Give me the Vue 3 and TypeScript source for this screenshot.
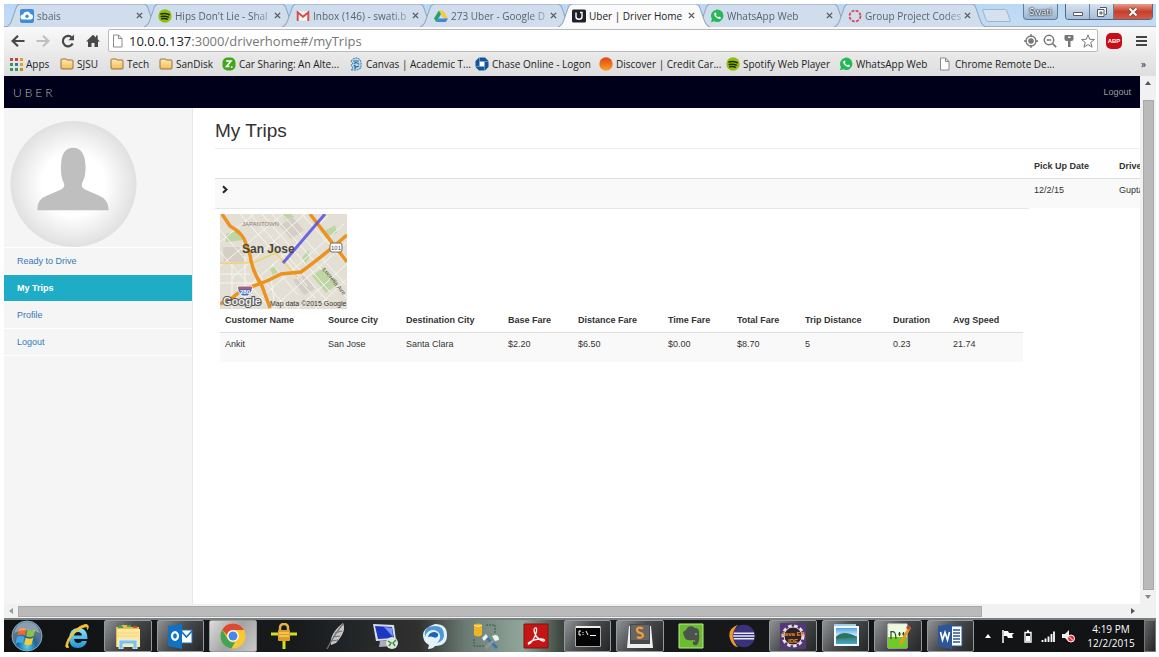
<script setup lang="ts">
import { ref } from 'vue'

interface Item { icon: string; label: string }

const tabs: Item[] = [
  { icon: 'cloud', label: 'sbais' },
  { icon: 'spotify', label: "Hips Don't Lie - Shal" },
  { icon: 'gmail', label: 'Inbox (146) - swati.b' },
  { icon: 'drive', label: '273 Uber - Google D' },
  { icon: 'uber', label: 'Uber | Driver Home' },
  { icon: 'whatsapp', label: 'WhatsApp Web' },
  { icon: 'canvas', label: 'Group Project Codes' },
]
const activeTab = ref(4)

const bookmarks: Item[] = [
  { icon: 'apps', label: 'Apps' },
  { icon: 'folder', label: 'SJSU' },
  { icon: 'folder', label: 'Tech' },
  { icon: 'folder', label: 'SanDisk' },
  { icon: 'zip', label: 'Car Sharing: An Alte...' },
  { icon: 'sjsu', label: 'Canvas | Academic T...' },
  { icon: 'chase', label: 'Chase Online - Logon' },
  { icon: 'discover', label: 'Discover | Credit Car...' },
  { icon: 'spotify', label: 'Spotify Web Player' },
  { icon: 'whatsapp', label: 'WhatsApp Web' },
  { icon: 'page', label: 'Chrome Remote De...' },
]

const menu = ['Ready to Drive', 'My Trips', 'Profile', 'Logout']
const activeMenu = ref('My Trips')

const fare = [
  { name: 'Customer Name', value: 'Ankit', width: 103 },
  { name: 'Source City', value: 'San Jose', width: 78 },
  { name: 'Destination City', value: 'Santa Clara', width: 102 },
  { name: 'Base Fare', value: '$2.20', width: 70 },
  { name: 'Distance Fare', value: '$6.50', width: 90 },
  { name: 'Time Fare', value: '$0.00', width: 69 },
  { name: 'Total Fare', value: '$8.70', width: 68 },
  { name: 'Trip Distance', value: '5', width: 88 },
  { name: 'Duration', value: '0.23', width: 60 },
  { name: 'Avg Speed', value: '21.74', width: 75 },
]

const apps = [
  { icon: 'ie', name: 'Internet Explorer', state: '' },
  { icon: 'explorer', name: 'Windows Explorer', state: 'open' },
  { icon: 'outlook', name: 'Outlook', state: 'open' },
  { icon: 'chrome', name: 'Chrome', state: 'open front' },
  { icon: 'lock', name: 'VPN', state: '' },
  { icon: 'feather', name: 'Apache', state: '' },
  { icon: 'remote', name: 'Remote Desktop', state: '' },
  { icon: 'chat', name: 'Lync', state: '' },
  { icon: 'tools', name: 'Database Tools', state: '' },
  { icon: 'acrobat', name: 'Adobe Reader', state: '' },
  { icon: 'cmd', name: 'Command Prompt', state: 'open' },
  { icon: 'sublime', name: 'Sublime Text', state: 'open' },
  { icon: 'evernote', name: 'Evernote', state: '' },
  { icon: 'eclipse', name: 'Eclipse', state: '' },
  { icon: 'javaee', name: 'Java EE IDE', state: 'open' },
  { icon: 'picture', name: 'Pictures', state: 'open' },
  { icon: 'notepad', name: 'Notepad++', state: 'open' },
  { icon: 'word', name: 'Word', state: 'open' },
]
const address = ref('/driverhome#/myTrips')
</script>

<template>
  <div class="desktop">
    <svg class="sprite" aria-hidden="true">
      <defs>
        <linearGradient id="g-folder" x2="0" y2="1"><stop stop-color="#ffe9ae" /><stop offset="1" stop-color="#f2bd5d" /></linearGradient>
        <linearGradient id="g-disc" x2="0" y2="1"><stop stop-color="#d9480f" /><stop offset="1" stop-color="#ff9d2e" /></linearGradient>
        <radialGradient id="g-orb" cy=".85"><stop stop-color="#4fd8f5" /><stop offset=".6" stop-color="#1f669e" /><stop offset="1" stop-color="#57748c" /></radialGradient>
        <radialGradient id="g-avatar"><stop offset=".5" stop-color="#fff" /><stop offset="1" stop-color="#e0e0e0" /></radialGradient>
        <linearGradient id="g-ie" x2="0" y2="1"><stop stop-color="#8ce4ff" /><stop offset="1" stop-color="#1f93d6" /></linearGradient>
        <linearGradient id="g-sky" x2="0" y2="1"><stop stop-color="#3d9be0" /><stop offset=".5" stop-color="#d6effa" /><stop offset=".55" stop-color="#377b71" /><stop offset="1" stop-color="#46afd4" /></linearGradient>
      </defs>

      <symbol id="cloud" viewBox="0 0 14 14"><rect width="14" height="14" rx="2" fill="#3e8ed8" /><path d="M3 10.500a2.500 2.500 0 0 1 0-5 4 4 0 0 1 7.500-.5 2.800 2.800 0 0 1 .5 5.500z" fill="#fff" /><circle cx="7" cy="7.300" r="1.700" fill="#3e8ed8" /></symbol>
      <symbol id="spotify" viewBox="0 0 14 14"><circle cx="7" cy="7" r="6.700" fill="#93bf0b" /><path d="M3 5q4-1.300 8.300.7M3.300 7.500q4-1 7 .7M3.800 9.700q3-.8 5.500.5" fill="none" stroke="#1c2b05" stroke-width="1.500" stroke-linecap="round" /></symbol>
      <symbol id="gmail" viewBox="0 0 14 14"><path d="M1 2.500h12v9H1z" fill="#f4f4f4" /><path d="M1.700 12V3.200L7 7.700l5.300-4.500V12" fill="none" stroke="#d64b43" stroke-width="1.900" /></symbol>
      <symbol id="drive" viewBox="0 0 14 14"><path d="M4.800 1.500h4.400L14 9.400H9.600z" fill="#fbc934" /><path d="M4.800 1.500 7 5.200 2.300 13 0 9.400z" fill="#24a367" /><path d="M4.600 9.400H14L11.800 13H2.300z" fill="#4285dc" /></symbol>
      <symbol id="uber" viewBox="0 0 14 14"><rect width="14" height="13" y=".5" rx="1.500" fill="#20202b" /><path d="M4 3.500v4.300q0 2.500 3 2.500t3-2.500V3.500H8" fill="none" stroke="#fff" stroke-width="1.400" /></symbol>
      <symbol id="whatsapp" viewBox="0 0 14 14"><path d="M1 13.200 1.900 10A6.200 6.200 0 1 1 4.300 12.300z" fill="#26b857" /><path d="M4.800 3.700Q3 5.500 6 8.300t4.700 1.300l.1-1.300-1.800-.9-.9.900Q6.500 7.600 5.900 5.900l.7-.8-.7-1.600z" fill="#fff" /></symbol>
      <symbol id="canvas" viewBox="0 0 14 14"><circle cx="7" cy="7" r="5.500" fill="none" stroke="#dc4352" stroke-width="1.700" stroke-dasharray="3 1.320" /></symbol>
      <symbol id="apps" viewBox="0 0 14 14"><g stroke-width="3" stroke-dasharray="3 2"><path d="M1 2.500h3" stroke="#cc453b" /><path d="M6 2.500h3" stroke="#cc453b" /><path d="M11 2.500h3" stroke="#dda22c" /><path d="M1 7.500h3" stroke="#359853" /><path d="M6 7.500h3" stroke="#3971c6" /><path d="M11 7.500h3" stroke="#dda22c" /><path d="M1 12.500h3M6 12.500h3" stroke="#359853" /><path d="M11 12.500h3" stroke="#b7962f" /></g></symbol>
      <symbol id="folder" viewBox="0 0 14 14"><path d="M1 3q0-1 1-1h4q1 0 1 1h5q1 0 1 1v7q0 1-1 1H2q-1 0-1-1z" fill="url(#g-folder)" stroke="#98713c" /></symbol>
      <symbol id="zip" viewBox="0 0 14 14"><rect x=".5" y=".5" width="13" height="13" rx="5" fill="#43a51c" /><path d="M4 4h5L4.500 9.500h3M9 10h1.500" fill="none" stroke="#fff" stroke-width="1.600" /></symbol>
      <symbol id="sjsu" viewBox="0 0 14 14"><path d="M2 4q2-3 6-3 4 1 4 5v5l-4 2H2l2-2-2-3 2-1z" fill="#bdd9ea" stroke="#397bab" stroke-dasharray="2 .7" /><path d="M4 4h6M5 6.500q3-2 5 1M5 8l2 2 3-1M6 12v-3" fill="none" stroke="#2369a0" stroke-width="1.200" /></symbol>
      <symbol id="chase" viewBox="0 0 14 14"><path d="M4 .5h6L13.500 4v6L10 13.500H4L.5 10V4z" fill="#14559b" /><path d="M4.500 4.500h5v5h-5z" fill="#fff" /><path d="M4.500 0v4.500M14 4.500H9.500M9.500 14V9.500M0 9.500h4.500" stroke="#e5e5e5" stroke-width=".4" /></symbol>
      <symbol id="discover" viewBox="0 0 14 14"><circle cx="7" cy="7" r="6.700" fill="url(#g-disc)" /></symbol>
      <symbol id="page" viewBox="0 0 14 14"><path d="M2.500 1h5L11 4.500V13H2.500zM7.500 1v3.500H11" fill="#fff" stroke="#8b8b8b" /></symbol>

      <symbol id="back" viewBox="0 0 14 14"><path d="M13.500 7H2M7 1.700 1.500 7 7 12.300" fill="none" stroke="currentColor" stroke-width="2.200" /></symbol>
      <symbol id="forward" viewBox="0 0 14 14"><path d="M.5 7H12M7 1.700 12.500 7 7 12.300" fill="none" stroke="currentColor" stroke-width="2.200" /></symbol>
      <symbol id="reload" viewBox="0 0 14 14"><path d="M11.700 9.500A5.200 5.200 0 1 1 10.800 3.500" fill="none" stroke="currentColor" stroke-width="2.200" /><path d="M13 .5v5.700H7.300z" fill="currentColor" /></symbol>
      <symbol id="home" viewBox="0 0 14 14"><path d="M7 .8 0 7.500h2V13h3.500V9h3v4H12V7.500h2L11.700 5.200V1.500H9.900v2z" fill="currentColor" /></symbol>
      <symbol id="locate" viewBox="0 0 14 14"><circle cx="7" cy="7" r="5" fill="none" stroke="currentColor" stroke-width="1.300" /><circle cx="7" cy="7" r="2.800" fill="currentColor" /><path d="M7 0v3M7 11v3M0 7h3M11 7h3" stroke="currentColor" stroke-width="1.300" /></symbol>
      <symbol id="zoomout" viewBox="0 0 14 14"><circle cx="6" cy="6" r="4.700" fill="none" stroke="currentColor" stroke-width="1.500" /><path d="M3.800 6h4.400M9.500 9.500l3.700 3.700" stroke="currentColor" stroke-width="1.700" /></symbol>
      <symbol id="key" viewBox="0 0 14 14"><path d="M3.500 1h7q1 0 1 1v3q0 2-2 2H8.500v6H6V7H4.500q-2 0-2-2V2q0-1 1-1z" fill="currentColor" /><path d="M6 3.300h2.500" stroke="#fff" stroke-width="1.300" /></symbol>
      <symbol id="star" viewBox="0 0 14 14"><path d="M7 .8 8.700 5.300l4.800.2-3.800 3 1.400 4.700L7 10.500l-4.100 2.700 1.400-4.700-3.800-3 4.800-.2z" fill="none" stroke="currentColor" /></symbol>

      <symbol id="orb" viewBox="0 0 32 32"><circle cx="16" cy="16" r="15" fill="url(#g-orb)" stroke="#86aec4" /><path d="M8 9q4-2 7.500 0l-1.600 6.500q-3.500-2-7.500 0z" fill="#ef6a26" /><path d="M16.700 9.600q4 2 7.600 0l-1.600 6.500q-4 2-7.600 0z" fill="#8dc43c" /><path d="M6 17q4-2 7.500 0L12 23.500q-4-2-7.500 0z" fill="#41a7e7" /><path d="M14.700 17.700q4 2 7.600 0l-1.600 6.500q-4 2-7.500 0z" fill="#fbc934" /><path d="M3 13Q6 2 16 2t13 11q-13-6-26 0" fill="#fff" opacity=".3" /></symbol>
      <symbol id="ie" viewBox="0 0 26 26"><path d="M23.500 16H10q.7 4.300 4.500 4 2.500 0 3.500-2h5q-2 7-9 7-8.500 0-9-9.500Q5.500 5.500 14 5q9.500 0 9.500 11M10 12.500h8q-.5-3.500-4-3.500t-4 3.500" fill="url(#g-ie)" /><path d="M5 24Q-1 27 4 16 11 4 21 1.500q5-.5 2.500 5Q24 2 18 5 8 10 4.500 19 3 24 5 24" fill="#f8c52c" stroke="#f8c52c" stroke-width=".8" /></symbol>
      <symbol id="explorer" viewBox="0 0 26 26"><path d="M1 4h4l2-2h7l1 2h9v20H1z" fill="#e9b94c" /><path d="M2 6h23v18H2z" fill="#fbe99f" /><path d="M3 4h5M12 3h4" stroke="#42a051" stroke-width="2" /><path d="M18 4h4" stroke="#cf4a33" stroke-width="2" /><path d="M2 10h22M2 13h22" stroke="#f2d477" /><path d="M4 26v-9h18v9h-4v-5H8v5z" fill="#7dc0ea" stroke="#d5effc" /></symbol>
      <symbol id="outlook" viewBox="0 0 26 26"><path d="M14 7h11v13H14z" fill="#fff" stroke="#1672c4" /><path d="m14 8 5.500 6L25 8" fill="none" stroke="#1672c4" stroke-width="1.800" /><path d="m1 3 14-2v25L1 23z" fill="#1071c5" /><ellipse cx="8" cy="13" rx="3" ry="3.800" fill="none" stroke="#fff" stroke-width="2.200" /></symbol>
      <symbol id="chrome" viewBox="0 0 26 26"><circle cx="13" cy="13" r="12.500" fill="#fac833" /><path d="M2.200 6.700A12.500 12.500 0 0 1 24 7H13a6 6 0 0 0-6 5z" fill="#db4939" /><path d="M2.200 6.700 8 16.500q2 3.500 7 2.500l-3.500 6.500A12.500 12.500 0 0 1 2.200 6.700" fill="#43a554" /><circle cx="13" cy="13" r="5.800" fill="#fff" /><circle cx="13" cy="13" r="4.500" fill="#4787e8" /></symbol>
      <symbol id="lock" viewBox="0 0 26 26"><path d="M0 11h26M13 15v11" stroke="#c9e51f" stroke-width="3" /><path d="M9 9V5q0-4 4-4t4 4v4" fill="none" stroke="#e1b347" stroke-width="2.500" /><rect x="7" y="7" width="12" height="11" rx="1" fill="#dd9d29" /><path d="M8 10h10M8 13h10" stroke="#f6d062" stroke-width="1.500" /></symbol>
      <symbol id="feather" viewBox="0 0 26 26"><path d="M21 0q4 8-7 20l-5 2Q7 11 21 0" fill="#c6c6c6" /><path d="M21 1Q14 9 5 26M11 14l7-1M13 10l7-2M10 18l6-1" fill="none" stroke="#727272" stroke-width="1.200" /></symbol>
      <symbol id="remote" viewBox="0 0 26 26"><path d="m1 1 21 1 2 15-20 1z" fill="#d8dde6" /><path d="m3 3 17 1 2 11-16 1z" fill="#1c37c2" /><path d="m12 4 8 1 1 9z" fill="#7895ec" /><path d="m8 18 12 0 2 5-15 1z" fill="#a8aeb5" /><circle cx="20" cy="20" r="6" fill="#dfe6d9" /><path d="m16 18 3 2-2 3M24 17l-3 3 2 3" fill="none" stroke="#37943f" stroke-width="1.500" /></symbol>
      <symbol id="chat" viewBox="0 0 26 26"><path d="M13 1q12 0 12 11T13 23q-2 3-7 3l1-4Q1 19 1 12T13 1" fill="#e2f3fc" /><path d="M3 14Q1 3 13 3q9 0 9 9 0 6-7 8 4-4 3-8-2-5-7-5-6 0-8 7" fill="#4f97d6" /><path d="M6 14q1-5 7-5 4 1 3 4-2 3-5 1-2-1-5 0" fill="#1f62ae" /></symbol>
      <symbol id="tools" viewBox="0 0 26 26"><path d="M1 2q4-3 8 0v10q-4 3-8 0z" fill="#edb526" /><path d="M1 2q4 3 8 0" fill="none" stroke="#fff0a0" /><path d="M13 2h9v9M1 16v7h10" fill="none" stroke="#2f5a35" stroke-dasharray="2 1" /><path d="m12 13 12 12" stroke="#3b76ae" stroke-width="3" /><path d="m13 25 9-9" stroke="#8f9698" stroke-width="3" /><path d="m19 13 3 5 4-1q0-5-4-5M9 15l4-4 2 3-4 4z" fill="#eef2f4" /></symbol>
      <symbol id="acrobat" viewBox="0 0 26 26"><path d="M1 1h24v24H1z" fill="#c51515" stroke="#811313" /><path d="M12 5q2-1 1.500 3-.5 4-3 8-3 5-5 5-1-1 3-3 4-2 9-2 4 0 4 1.500-1 1.500-5-1-4-3-5-7-1-4 .5-4.500" fill="none" stroke="#fff" stroke-width="1.300" /></symbol>
      <symbol id="cmd" viewBox="0 0 26 26"><path d="M.5 3.500h25v20H.5z" fill="#050505" stroke="#a9a9a9" /><path d="M1 4h24" stroke="#eee" stroke-width="2" /><path d="M6 8H4v4h2M8 9v1M8 11v1M11 8l2 4M15 12.500h6" fill="none" stroke="#fff" /></symbol>
      <symbol id="sublime" viewBox="0 0 26 26"><path d="M2 3h22l2 22H0z" fill="#eee" /><path d="M3 1h20v20H3z" fill="#494949" /><path d="M4 2h18v15H4z" fill="#656565" /><path d="M16 5.500q-6-2-6 1t3 3.300 3 3.200q-2 3-6 1" fill="none" stroke="#f79b36" stroke-width="2.200" /></symbol>
      <symbol id="evernote" viewBox="0 0 26 26"><path d="M1 1h24v24H1z" fill="#6abd30" stroke="#b8ef86" /><path d="M5 9q3-1 5-5 4-2 7 1 4 0 4 4 1 10-2 13-3 1-4-1v-3l2 1q1-2-2-2-7 1-8-2-2-4-2-6" fill="#4c534d" /><path d="M17 11h2" stroke="#c3cfc0" /></symbol>
      <symbol id="eclipse" viewBox="0 0 28 26"><path d="M10 1Q-2 5 1 16q3 9 9 9-5-4-5-12T10 1" fill="#f3992a" /><circle cx="16" cy="13" r="12" fill="#39327a" /><path d="M5 10h22M4.500 13h23M5 16h22" stroke="#e6e9f4" stroke-width="1.700" /></symbol>
      <symbol id="javaee" viewBox="0 0 26 26"><path d="M0 0h26v26H0z" fill="#533777" /><circle cx="13" cy="13" r="10" fill="#3a2541" stroke="#e7e0e7" stroke-width="3" stroke-dasharray="3.500 2.500" /><circle cx="13" cy="13" r="9" fill="#2d2229" stroke="#ddd" /><text x="13" y="13" text-anchor="middle">Java EE</text><text x="13" y="20" text-anchor="middle">IDE</text></symbol>
      <symbol id="picture" viewBox="0 0 26 26"><path d="M1 1h22v20H1z" fill="#9ed0e9" /><path d="M2 4h23v18H2z" fill="url(#g-sky)" stroke="#eff9ff" stroke-width="2" /><path d="M3 14q7-8 21 0l-21 2z" fill="#2f7160" /></symbol>
      <symbol id="notepad" viewBox="0 0 26 26"><path d="M3 1h19v24H3z" fill="#ecfbde" stroke="#e8e8e8" /><path d="M3 14h19v11H3z" fill="#70cc25" /><path d="M6 8v8M6 9q5-2 5 7M13 11h3M17 11h3M14.500 9v4M18.500 9v4" fill="none" stroke="#2d4430" stroke-width="1.200" /><path d="m24 3 2 2-9 16-3 1 1-4z" fill="#e89a26" /><path d="m23 2 3 2-2 3-3-2z" fill="#c7443d" /></symbol>
      <symbol id="word" viewBox="0 0 26 26"><path d="M13 3h12v20H13z" fill="#fff" stroke="#2b579a" /><path d="M16 7h7M16 10h7M16 13h7M16 16h7M16 19h7" stroke="#2b579a" stroke-width="1.500" /><path d="m1 3 14-2v25L1 23z" fill="#2b579a" /><path d="m3.500 9 2 8L8 9.500l2.500 7.500 2-8" fill="none" stroke="#fff" stroke-width="1.700" /></symbol>
    </svg>

    <header class="chrome">
      <div class="strip">
        <nav class="tabs" aria-label="Tabs">
          <div v-for="(t, i) in tabs" :key="t.label" class="tab" :class="{ active: i === activeTab }">
            <svg class="shape" viewBox="0 0 152 22" preserveAspectRatio="none"><path d="M0 22Q4 21 6 15L10 4Q11 0 15 0H137Q141 0 142 4L146 15Q148 21 152 22" /></svg>
            <button class="pick" @click="activeTab = i"><svg class="i14"><use :href="'#' + t.icon" /></svg><span>{{ t.label }}</span></button>
            <button class="close" :aria-label="'Close ' + t.label"><svg viewBox="0 0 8 8"><path d="m1 1 6 6M7 1 1 7" /></svg></button>
          </div>
          <button class="new" aria-label="New tab"></button>
        </nav>
        <div class="controls">
          <button class="user">Swati</button>
          <div class="winbtns">
            <button aria-label="Minimize"><svg viewBox="0 0 14 12"><path d="M2.500 6.500h9v3h-9z" fill="#fff" stroke="#545b68" /></svg></button>
            <button aria-label="Restore"><svg viewBox="0 0 14 12"><path d="M5 1.500h6.500v7H10M2.500 3.500H9v7H2.500zM5 6h2v2H5z" fill="#fff" stroke="#545b68" /></svg></button>
            <button class="x" aria-label="Close window"><svg viewBox="0 0 14 12"><path d="m3.500 2.500 7 7M10.500 2.500l-7 7" stroke="#6f3530" stroke-width="3.600" /><path d="m3.500 2.500 7 7M10.500 2.500l-7 7" stroke="#fff" stroke-width="2.200" /></svg></button>
          </div>
        </div>
      </div>

      <div class="toolbar">
        <button class="tool" aria-label="Back"><svg class="i14"><use href="#back" /></svg></button>
        <button class="tool off" aria-label="Forward"><svg class="i14"><use href="#forward" /></svg></button>
        <button class="tool" aria-label="Reload"><svg class="i14"><use href="#reload" /></svg></button>
        <button class="tool" aria-label="Home"><svg class="i14"><use href="#home" /></svg></button>
        <div class="omnibox">
          <svg class="i14"><use href="#page" /></svg>
          <label class="host" for="address">10.0.0.137<span>:3000</span></label>
          <input id="address" v-model="address" type="text" />
          <button v-for="n in ['locate', 'zoomout', 'key', 'star']" :key="n" :aria-label="n"><svg class="i14"><use :href="'#' + n" /></svg></button>
        </div>
        <button class="abp">ABP</button>
        <button class="burger" aria-label="Menu"><i></i><i></i><i></i></button>
      </div>

      <nav class="bookmarks" aria-label="Bookmarks">
        <a v-for="b in bookmarks" :key="b.label" href="#"><svg class="i14"><use :href="'#' + b.icon" /></svg>{{ b.label }}</a>
        <button class="more" aria-label="More bookmarks">»</button>
      </nav>
    </header>

    <div class="viewport">
      <div class="page">
        <header class="navbar"><a class="brand" href="#">UBER</a><a class="logout" href="#">Logout</a></header>
        <div class="body">
          <aside class="side">
            <svg class="avatar" viewBox="0 0 127 127" role="img" aria-label="Driver photo"><circle cx="63.500" cy="63.500" r="63.500" fill="url(#g-avatar)" /><path d="M27 90q-1-11 10-15l14-6q4-2 3-6-4-7-3-20 1-16 12-16t12.500 16q1 12-3.500 20-1 4 3 6l14 6q10 4 10 15z" fill="#bfbfbf" /></svg>
            <nav class="menu" aria-label="Driver">
              <a v-for="m in menu" :key="m" href="#" :class="{ on: m === activeMenu }" @click.prevent="activeMenu = m">{{ m }}</a>
            </nav>
          </aside>
          <main class="main">
            <h1>My Trips</h1>
            <table class="trips">
              <colgroup><col class="c-detail" /><col class="c-date" /><col /></colgroup>
              <thead><tr><th></th><th>Pick Up Date</th><th>Driver Name</th></tr></thead>
              <tbody>
                <tr class="trip">
                  <td><button class="toggle" aria-label="Toggle trip"><svg viewBox="0 0 6 8"><path d="m1 0.700 3.500 3.300L1 7.300" /></svg></button></td>
                  <td>12/2/15</td><td>Gupta</td>
                </tr>
                <tr>
                  <td class="detail">
                    <svg class="map" viewBox="0 0 127 95" role="img" aria-label="Map of San Jose">
                      <rect width="127" height="95" fill="#e3dfd5" />
                      <g fill="#bed6a3"><path d="m6 20 14-4 3 10-17 2zM92 62l12-9 15 16-13 10zM82 44l6-8 2 6-4 7zM50 55l5-3 3 6-5 3zM62 0h9l3 3-9 3zM103 18l12-7 2 8-8 3z" /></g>
                      <g fill="#d4cec5"><path d="m60 12 12-9 12 13-13 9zM3 33l16 0 9 15H4zM73 66l12-5 10 14-11 6z" /></g>
                      <g stroke="#f7f5f0" stroke-width="1" fill="none">
                        <path d="m0 16 68 79M20 0l75 84M42 0l68 78M62 0l64 71M82 0l45 50M0 38l48 54M30 0l80 90M52 0l75 84M0 28 34 0M0 52 63 0M12 64 85 0M20 80 108 2M42 83 124 10M52 95 127 28M77 95 127 50M95 95l32-30" />
                        <path d="M0 69h38l13-6 4 32M12 48v47M25 42v51M0 60h30M52 50l26 31M61 40l26 32" />
                      </g>
                      <path d="M0 49q20 1 35-1L60 37M50 33l27 30" fill="none" stroke="#efd36f" stroke-width="1.500" />
                      <g fill="none" stroke="#ec921d" stroke-width="3.500"><path d="M2 0 10 12q14 8 16 18 4 8 5 17 3 13 11 25l8 22" /><path d="M0 90 12 84 23 75q20-5 38-15l20-2q22-16 46-37M90 0l37 48" /></g>
                      <path d="M105 0 63 49" stroke="#5552e0" stroke-width="3" opacity=".85" />
                      <rect x="110" y="29" width="12" height="9" rx="2" fill="#fff" stroke="#776c60" />
                      <path d="M18 72h14v5l-4 5h-6l-4-5z" fill="#3d6fc3" stroke="#fff" /><path d="M18 74h14" stroke="#d25350" stroke-width="2" />
                      <text class="m-sm" x="22" y="12">JAPANTOWN</text>
                      <text class="m-city" x="22" y="39">San Jose</text>
                      <text class="m-road" x="111" y="36">101</text>
                      <text class="m-280" x="20" y="80">280</text>
                      <text class="m-road" transform="translate(102 56) rotate(50)">Lucretia Ave</text>
                      <text class="m-logo" x="3" y="91">Google</text>
                      <text class="m-copy" x="50" y="92">Map data ©2015 Google</text>
                    </svg>
                    <table class="fares">
                      <colgroup><col v-for="f in fare" :key="f.name" :style="{ width: f.width + 'px' }" /></colgroup>
                      <thead><tr><th v-for="f in fare" :key="f.name">{{ f.name }}</th></tr></thead>
                      <tbody><tr><td v-for="f in fare" :key="f.name">{{ f.value }}</td></tr></tbody>
                    </table>
                  </td>
                  <td></td><td></td>
                </tr>
              </tbody>
            </table>
          </main>
        </div>
      </div>
      <div class="vbar"><i class="arrow up"></i><span></span><i class="arrow down"></i></div>
    </div>
    <div class="hbar"><i class="arrow left"></i><div><span></span></div><i class="arrow right"></i></div>

    <footer class="taskbar">
      <button class="start" aria-label="Start"><svg><use href="#orb" /></svg></button>
      <div class="running">
        <button v-for="a in apps" :key="a.icon" :class="a.state" :aria-label="a.name"><svg><use :href="'#' + a.icon" /></svg></button>
      </div>
      <div class="tray">
        <button aria-label="Show hidden icons"><i class="arrow up light"></i></button>
        <button aria-label="Action center"><svg viewBox="0 0 14 14"><path d="M2 1v13" stroke="#fff" stroke-width="1.500" /><path d="M3 2h4l1 2h5l-2 2 1 3H7L6 7H3z" fill="#fff" /></svg></button>
        <button aria-label="Battery"><svg viewBox="0 0 14 14"><path d="M4 3.500h6v9.500H4zM6 2h2" fill="none" stroke="#fff" stroke-width="1.400" /><path d="M5 7h4v5H5z" fill="#fff" /></svg></button>
        <button aria-label="Network"><svg viewBox="0 0 14 14"><path d="M1.500 13v-2M4.500 13V9.500M7.500 13V7.500M10.500 13V5M13 13V2.500" stroke="#fff" stroke-width="1.800" /></svg></button>
        <button aria-label="Volume muted"><svg viewBox="0 0 14 14"><path d="M1 5h3l4-4v12L4 9H1z" fill="#eee" /><circle cx="10" cy="9.500" r="3.500" fill="#df332d" stroke="#fff" /><path d="m8 7.500 4 4" stroke="#fff" /></svg></button>
      </div>
      <time class="clock"><span>4:19 PM</span><span>12/2/2015</span></time>
      <button class="peek" aria-label="Show desktop"></button>
    </footer>
  </div>
</template>

<style>
body { background: #fff; }
</style>

<style scoped>
* { box-sizing: border-box; }
button { border: 0; padding: 0; background: none; font: inherit; color: inherit; display: flex; align-items: center; justify-content: center; }
a { text-decoration: none; color: inherit; }
.desktop { min-height: 100vh; padding: 4px 3px 5px 4px; display: flex; flex-direction: column; font-family: "Open Sans", "Noto Sans", sans-serif; color: #333; }
.sprite { position: absolute; width: 0; height: 0; }
.sprite text { font: bold 6px "Liberation Sans", sans-serif; fill: #f08a23; }
.i14 { width: 14px; height: 14px; flex: none; }

.strip { display: flex; justify-content: space-between; height: 23px; background: linear-gradient(#b9d8f5, #c3dcf4); border-bottom: 1px solid #a5adb6; }
.tabs { display: flex; padding-left: 2px; }
.tab { position: relative; width: 138px; height: 23px; display: flex; align-items: center; padding: 0 0 0 14px; }
.shape { position: absolute; left: 0; top: 0; width: 152px; height: 23px; }
.shape path { fill: #d0dded; stroke: #8fa4bb; }
.tab.active { z-index: 1; }
.tab.active .shape path { fill: #fafafa; }
.pick { position: relative; flex: 1; min-width: 0; justify-content: flex-start; gap: 3px; font-size: 10px; color: #59636f; }
.pick span { flex: 1; min-width: 0; text-align: left; white-space: nowrap; mask-image: linear-gradient(90deg, #000 80%, rgb(0 0 0 / 30%)); }
.active .pick { color: #222; }
.active .pick span { mask-image: none; }
.close { position: relative; width: 10px; flex: none; }
.close svg { width: 7px; height: 7px; stroke: #555; stroke-width: 1.500; }
.new { width: 25px; height: 13px; margin: 5px 0 0 12px; background: #d5e1ef; border: 1px solid #9db5cd; border-radius: 2px; transform: skewX(20deg); }
.controls { display: flex; gap: 7px; align-items: flex-start; padding-right: 3px; }
.user { width: 35px; height: 16px; border: 1px solid #667c95; border-top: 0; border-radius: 0 0 4px 4px; background: linear-gradient(#c8dcf0, #9cb7d2); color: #fff; font-size: 9px; text-shadow: 0 0 2px #000, 0 0 2px #000; }
.winbtns { display: flex; border: 1px solid #566779; border-top: 0; border-radius: 0 0 4px 4px; overflow: hidden; }
.winbtns button { width: 24px; height: 15px; background: linear-gradient(#d5e3f1, #a6bed6); border-right: 1px solid #6c8095; }
.winbtns .x { width: 38px; border: 0; background: linear-gradient(#e79c8b, #c5402d 50%, #d55a42); }
.winbtns svg { width: 14px; height: 12px; fill: none; }

.toolbar { display: flex; align-items: center; height: 27px; padding: 0 9px 0 7px; background: linear-gradient(#f9f9f9, #eaeaea); color: #484848; }
.tool { width: 14px; margin-right: 11px; }
.tool.off { color: #c0c0c0; }
.omnibox { flex: 1; min-width: 0; display: flex; align-items: center; height: 23px; padding: 0 2px; margin-left: -3px; background: #fff; border: 1px solid #bababa; border-radius: 2px; color: #777; }
.host { margin-left: 4px; font-size: 13px; color: #222; }
.host span { color: #777; }
.omnibox input { flex: 1; min-width: 0; border: 0; padding: 0; outline: 0; background: none; font: 13px "Open Sans", "Noto Sans", sans-serif; color: #777; }
.omnibox button { margin-left: 5px; }
.abp { width: 16px; height: 16px; margin: 0 14px 0 8px; border-radius: 5px; background: #c70d18; color: #fff; font: bold 6px "Liberation Sans", sans-serif; }
.burger { flex-direction: column; gap: 2px; width: 11px; }
.burger i { width: 11px; height: 2px; background: #444; }

.bookmarks { display: grid; grid-template-columns: 51px 50px 49px 63px 127px 126px 124px 127px 113px 99px 1fr auto; align-items: center; height: 22px; padding: 0 10px 3px 5px; background: linear-gradient(#e9e9e9, #dedede); font-size: 10px; color: #222; }
.bookmarks a { display: flex; align-items: center; gap: 3px; white-space: nowrap; }

.viewport { flex: 1; display: flex; min-height: 0; }
.page { flex: 1; min-width: 0; overflow: hidden; display: flex; flex-direction: column; font-family: "Liberation Sans", Arial, sans-serif; font-size: 9px; line-height: 13px; }
.navbar { display: flex; justify-content: space-between; align-items: center; height: 32px; padding: 0 9px; background: #00001a; color: #9d9d9d; }
.brand { font: 300 12px Lato, "Liberation Sans", sans-serif; letter-spacing: 3px; color: #b5b5b5; }
.body { flex: 1; display: flex; }
.side { width: 189px; flex: none; padding-top: 13px; background: #f5f5f5; border-right: 1px solid #e8e8e8; }
.avatar { display: block; width: 127px; height: 126px; margin-left: 6px; }
.menu a { display: flex; align-items: center; height: 27px; padding-left: 13px; border-top: 1px solid #fff; color: #337ab7; }
.menu { border-bottom: 1px solid #fff; }
.menu a.on { background: #1facc7; color: #fff; font-weight: bold; }
.main { flex: 1; min-width: 0; padding: 10px 0 0 22px; overflow: hidden; }
h1 { margin: 0 0 4px; padding-bottom: 5px; border-bottom: 1px solid #eee; font-size: 19px; line-height: 25px; font-weight: normal; color: #333; }
table { border-collapse: collapse; table-layout: fixed; }
th { padding: 5px; text-align: left; vertical-align: bottom; white-space: nowrap; color: #333; }
td { padding: 5px; vertical-align: top; }
.trips { width: 1010px; }
.c-detail { width: 814px; }
.c-date { width: 85px; }
.trips > thead th { padding-bottom: 5px; height: 25px; border-bottom: 1px solid #ddd; }
.trip td { height: 30px; background: #f9f9f9; }
.trip td:first-child { border-bottom: 1px solid #e6e6e6; }
.toggle { margin: 1px 0 0 2px; }
.toggle svg { width: 6px; height: 9px; fill: none; stroke: #222; stroke-width: 2; }
.map { display: block; width: 127px; height: 95px; }
.fares { width: 803px; }
.fares th { height: 24px; border-bottom: 1px solid #ddd; }
.fares td { height: 29px; background: #f9f9f9; }
.m-sm { font-size: 6px; fill: #8c8074; }
.m-city { font-size: 12px; font-weight: bold; fill: #484541; }
.m-road { font-size: 6px; fill: #554e48; }
.m-280 { font-size: 6px; font-weight: bold; fill: #fff; }
.m-logo { font-size: 11px; font-weight: bold; fill: #eee; stroke: #555; stroke-width: 2px; paint-order: stroke; }
.m-copy { font-size: 7px; fill: #333; }

.vbar { width: 16px; display: flex; flex-direction: column; align-items: center; padding: 5px 0; background: #f1f1f1; }
.vbar span { flex: 1; width: 11px; margin: 15px 0 5px; background: #bababa; border: 1px solid #a9a9a9; }
.arrow { width: 0; height: 0; border: 3px solid transparent; }
.up { border-bottom: 4px solid #555; border-top: 0; }
.down { border-top: 4px solid #888; border-bottom: 0; }
.left { border-right: 4px solid #999; border-left: 0; }
.right { border-left: 4px solid #555; border-right: 0; }
.light { border-bottom-color: #fff; }
.hbar { display: flex; align-items: center; height: 14px; padding: 0 21px 0 5px; background: #f1f1f1; }
.hbar div { flex: 1; margin: 0 5px; }
.hbar span { display: block; width: 87%; height: 11px; background: #bababa; border: 1px solid #a9a9a9; }

.taskbar { display: flex; height: 34px; border-top: 2px solid #797e80; background: linear-gradient(90deg, #101214, #17191b 25%, #222527 30%, #30302f 36%, #697a72 40%, #91a69b 45%, #455049 48%, #242526 50%, #17191b 54%, #101214); }
.start { width: 46px; }
.start svg { width: 32px; height: 32px; }
.running { flex: 1; display: flex; gap: 5px; padding-left: 4px; }
.running button { flex: 1; border-radius: 2px; }
.running svg { width: 26px; height: 26px; }
.running .open { border: 1px solid #96999b; background: linear-gradient(125deg, #909396, #4a4c4e 45%, #242628); }
.running .front { background: linear-gradient(125deg, #ddd, #a3a3a3 50%, #c9c9c9); }
.tray { display: flex; align-items: center; padding-left: 4px; }
.tray button { width: 20px; }
.tray svg { width: 14px; height: 14px; }
.clock { width: 66px; display: flex; flex-direction: column; align-items: center; justify-content: center; font-size: 10px; line-height: 14px; color: #fff; }
.peek { width: 12px; border: 1px solid #777; background: linear-gradient(110deg, #666, #222); }
</style>
